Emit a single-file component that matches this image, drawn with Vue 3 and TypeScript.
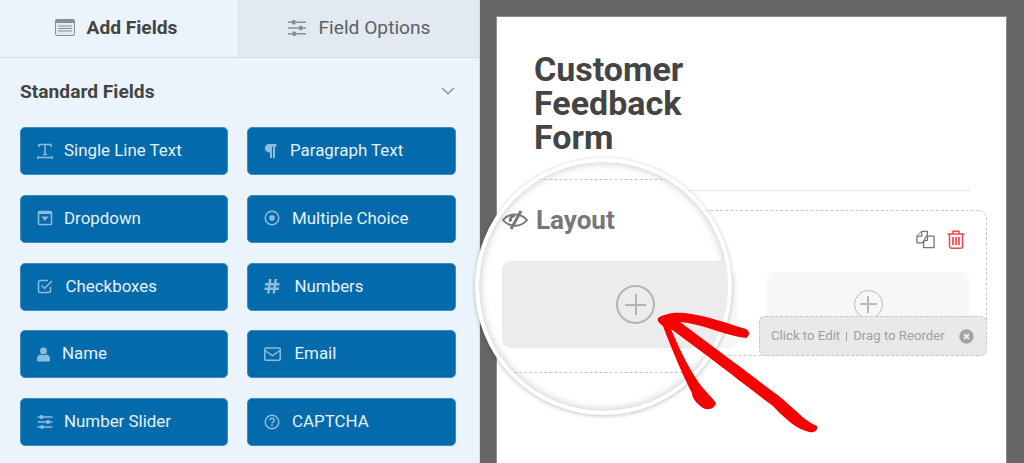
<script setup lang="ts">
interface Field {
  label: string;
  iconW: number; // width of the slot before the label, they differ per icon
  stroke?: string[];
  fill?: string[];
}

const fields: Field[] = [
  {
    label: "Single Line Text",
    iconW: 27.5,
    stroke: ["M2 4V1.5H14V4", "M8 1.5V11.5", "M6 11.5H10", "M1 14.5H15", "M1 13V16", "M15 13V16"],
  },
  { label: "Paragraph Text", iconW: 26.5, fill: ["M5 1H12.5V3.5H11V15H9V3.5H8V15H6V9.5C3 9.5 .8 8 .8 5.3S3 1 5 1Z"] },
  {
    label: "Dropdown",
    iconW: 27.5,
    stroke: ["M2.5 1.5H13.5A1 1 0 0 1 14.5 2.5V13.5A1 1 0 0 1 13.5 14.5H2.5A1 1 0 0 1 1.5 13.5V2.5A1 1 0 0 1 2.5 1.5Z"],
    fill: ["M1.5 2H14.5V4H1.5Z", "M4.5 6.5H11.5L8 11Z"],
  },
  {
    label: "Multiple Choice",
    iconW: 28.5,
    stroke: ["M8 1.2A6.8 6.8 0 1 1 8 14.8A6.8 6.8 0 1 1 8 1.2Z"],
    fill: ["M8 5.2A2.8 2.8 0 1 1 8 10.8A2.8 2.8 0 1 1 8 5.2Z"],
  },
  {
    label: "Checkboxes",
    iconW: 29,
    stroke: ["M13.5 9V13A1.5 1.5 0 0 1 12 14.5H3A1.5 1.5 0 0 1 1.5 13V4A1.5 1.5 0 0 1 3 2.5H11", "M4.5 7.5L7.5 10.5L15 3"],
  },
  {
    label: "Numbers",
    iconW: 31,
    fill: ["M5 1H7.5L7 5H10L10.5 1H13L12.5 5H15.5V7.5H12.2L11.9 9.5H15V12H11.5L11 15.5H8.5L9 12H6L5.5 15.5H3L3.5 12H.5V9.5H3.8L4.1 7.5H1V5H4.5ZM6.6 7.5L6.3 9.5H9.3L9.6 7.5Z"],
  },
  {
    label: "Name",
    iconW: 25.5,
    fill: ["M6.5 1.5A3.4 3.4 0 1 1 6.5 8.3A3.4 3.4 0 1 1 6.5 1.5Z", "M3 8.6C5 9.6 8 9.6 10 8.6C12 9.2 13 11 13 13V14A1.5 1.5 0 0 1 11.5 15.5H1.5A1.5 1.5 0 0 1 0 14V13C0 11 1 9.2 3 8.6Z"],
  },
  {
    label: "Email",
    iconW: 31,
    stroke: ["M2 2H15A1.2 1.2 0 0 1 16.2 3.2V13A1.2 1.2 0 0 1 15 14.2H2A1.2 1.2 0 0 1 .8 13V3.2A1.2 1.2 0 0 1 2 2Z", "M1 4.5L8.5 9.5L16 4.5"],
  },
  {
    label: "Number Slider",
    iconW: 27.5,
    stroke: ["M.5 3H15.5", "M.5 8H15.5", "M.5 13H15.5"],
    fill: ["M3 1.2H6V4.8H3Z", "M9.5 6.2H12.5V9.8H9.5Z", "M3.5 11.2H6.5V14.8H3.5Z"],
  },
  {
    label: "CAPTCHA",
    iconW: 28.5,
    stroke: ["M8 1.2A6.8 6.8 0 1 1 8 14.8A6.8 6.8 0 1 1 8 1.2Z", "M5.9 6.2C5.9 3.6 10.2 3.6 10.2 6.2C10.2 7.9 8 7.7 8 9.6"],
    fill: ["M7.1 10.6H8.9V12.2H7.1Z"],
  },
];
</script>

<template>
  <div class="page">
    <aside class="panel">
      <div class="tabs">
        <div class="tab active">
          <svg class="tab-icon" width="20" height="17" viewBox="0 0 20 17">
            <rect x="0.5" y="0.5" width="19" height="16" rx="1.5" fill="#e4e9ef" stroke="#8a8f94" />
            <rect x="0.5" y="0.5" width="19" height="3.5" fill="#8a8f94" />
            <path d="M3 7H17M3 9.5H17M3 12H17" stroke="#8a8f94" stroke-width="1.2" />
          </svg>
          <span>Add Fields</span>
        </div>
        <div class="tab">
          <svg class="tab-icon" width="18" height="18" viewBox="0 0 18 18" fill="#8a8f94">
            <path d="M0 2.5H18V4H0ZM0 8.2H18V9.7H0ZM0 14H18V15.5H0Z" />
            <rect x="4" y="1" width="3.5" height="4.5" rx="1" />
            <rect x="11" y="6.8" width="3.5" height="4.5" rx="1" />
            <rect x="4.5" y="12.5" width="3.5" height="4.5" rx="1" />
          </svg>
          <span>Field Options</span>
        </div>
      </div>

      <div class="section-head">
        <h2>Standard Fields</h2>
        <svg width="14" height="8" viewBox="0 0 14 8" fill="none" stroke="#8f959b" stroke-width="1.5">
          <path d="M.8 .8L7 6.8L13.2 .8" />
        </svg>
      </div>

      <div class="field-grid">
        <button v-for="f in fields" :key="f.label" class="field-btn">
          <span class="field-icon" :style="{ width: f.iconW + 'px' }">
            <svg width="17" height="17" viewBox="0 0 17 17">
              <path v-for="d in f.stroke" :key="d" :d="d" fill="none" stroke="#8dbcdc" stroke-width="1.5" />
              <path v-for="d in f.fill" :key="d" :d="d" fill="#8dbcdc" />
            </svg>
          </span>
          <span class="field-label">{{ f.label }}</span>
        </button>
      </div>
    </aside>

    <main class="stage">
      <div class="form">
        <h1>Customer<br />Feedback<br />Form</h1>
        <hr />
        <section class="layout-box">
          <div class="layout-actions">
            <svg width="19" height="19" viewBox="0 0 20 19" fill="#fff" stroke="#777" stroke-width="1.4" stroke-linejoin="round">
              <path d="M6 1H12V6H11L7 13H1V6Z" />
              <path d="M6 1V6H1" />
              <path d="M12 6H19V18H8V13L11 6Z" />
              <path d="M12 6V10.5H8.5" />
            </svg>
            <svg width="18" height="19" viewBox="0 0 18 19" fill="none" stroke="#f4444c" stroke-width="1.5">
              <path d="M.5 4H17.5M6 4V1.2H12V4" />
              <path d="M2.5 4V16.5A1.8 1.8 0 0 0 4.3 18.2H13.7A1.8 1.8 0 0 0 15.5 16.5V4" />
              <path d="M6 7V15M9 7V15M12 7V15" stroke-width="1.7" />
            </svg>
          </div>
          <div class="columns">
            <div class="col">
              <span class="plus"></span>
            </div>
            <div class="col">
              <span class="plus"></span>
            </div>
          </div>
          <div class="hover-tip">
            <span>Click to Edit</span>
            <i></i>
            <span>Drag to Reorder</span>
            <svg width="15" height="15" viewBox="0 0 15 15">
              <circle cx="7.5" cy="7.5" r="7.2" fill="#a3a3a3" />
              <path d="M5 5L10 10M10 5L5 10" stroke="#ececec" stroke-width="2" />
            </svg>
          </div>
        </section>
      </div>
    </main>

    <!-- magnifier over the form -->
    <div class="lens">
      <div class="lens-field">
        <div class="lens-title">
          <svg width="26" height="20" viewBox="0 0 26 20" fill="none" stroke="#777" stroke-width="2">
            <path d="M1 10C7 2.5 19 2.5 25 10C19 17.5 7 17.5 1 10Z" />
            <path d="M13 5.5A4.5 4.5 0 0 0 8.6 11.5" stroke-width="3" />
            <path d="M19 1L9 19" stroke-width="3" />
          </svg>
          <span>Layout</span>
        </div>
        <div class="lens-col">
          <span class="plus big"></span>
        </div>
      </div>
    </div>

    <svg class="arrow" width="1024" height="463" viewBox="0 0 1024 463" fill="#f60000">
      <path d="M658 318C664 314 674 312 684 313C704 315 726 323 746 329C750 331 750 336 746 338C728 336 706 326 688 323L680 322C704 340 738 365 772 391C780 396 788 404 796 411C804 419 812 424 817 426C818 430 815 433 809 432C797 429 786 420 773 406C762 398 720 365 671 329C678 346 687 365 697 380C701 387 711 396 716 403C715 408 709 411 703 408C696 403 692 398 692 393C684 378 672 350 663 326C659 323 657 321 658 318Z" />
    </svg>
  </div>
</template>

<style>
html,
body {
  margin: 0;
  background: #666;
}
</style>

<style scoped>
.page {
  position: relative;
  display: flex;
  width: 1024px;
  height: 463px;
  overflow: hidden;
  font-family: Roboto, "Liberation Sans", sans-serif;
}
.panel {
  width: 480px;
  flex: none;
  box-sizing: border-box;
  background: #ebf3fc;
  border-right: 1px solid #d6dde4;
}
.tabs {
  display: flex;
  height: 58px;
  box-sizing: border-box;
  border-bottom: 1px solid #d5dbe2;
}
.tab {
  flex: 1;
  display: flex;
  align-items: center;
  justify-content: center;
  gap: 12px;
  padding: 0 0 2px 1px;
  font-size: 19.2px;
  color: #5d6166;
  background: #e2e9f1;
  border-left: 1px solid #d5dbe2;
}
.tab.active {
  flex: none;
  width: 238px;
  box-sizing: border-box;
  padding: 0 6px 2px 0;
  font-weight: 700;
  color: #444;
  background: #ebf3fc;
  border-left: 0;
}
.section-head {
  display: flex;
  align-items: center;
  justify-content: space-between;
  padding: 22px 24px 0 20px;
  height: 22px;
}
.section-head h2 {
  margin: 0;
  font-size: 19.2px;
  font-weight: 700;
  color: #444;
}
.field-grid {
  display: grid;
  grid-template-columns: 208px 208.5px;
  column-gap: 19px;
  row-gap: 19.75px;
  padding: 25px 0 0 20px;
}
.field-btn {
  display: flex;
  align-items: center;
  height: 48px;
  padding: 0 0 2px 15.5px;
  border: 1px solid #3d8dc2;
  border-radius: 5px;
  background: #036aab;
  color: #e6f1f9;
  font: 400 16.9px Roboto, "Liberation Sans", sans-serif;
  box-sizing: border-box;
}
.field-icon {
  display: flex;
  flex: none;
  margin-top: 2px;
}
.stage {
  flex: 1;
  padding: 17px 18px 0 17px;
  background: #666;
  min-width: 0;
}
.form {
  height: 100%;
  box-sizing: border-box;
  padding: 35px 36px 0 37px;
  background: #fff;
  outline: 1px solid #8e8e8e;
}
h1 {
  margin: 0;
  font-size: 34px;
  line-height: 34px;
  font-weight: 700;
  color: #444;
}
hr {
  margin: 36px 0 18px;
  border: 0;
  border-top: 1px solid #e4e4e4;
}
.layout-box {
  position: relative;
  top: 1px;
  margin: 0 -17px;
  height: 146px;
  box-sizing: border-box;
  border: 1px dashed #c8c8c8;
  border-radius: 8px;
  padding: 19px 17px 0 19px;
}
.layout-actions {
  display: flex;
  justify-content: flex-end;
  gap: 12px;
  height: 42px;
  padding-right: 4px;
}
.columns {
  display: grid;
  grid-template-columns: 200px 202px;
  column-gap: 30px;
  justify-content: end;
}
.col {
  display: flex;
  align-items: center;
  justify-content: center;
  height: 76px;
  background: #f7f7f7;
  border-radius: 8px;
  padding-bottom: 12px;
  box-sizing: border-box;
}
.plus {
  position: relative;
  display: block;
  width: 29px;
  height: 29px;
  box-sizing: border-box;
  border: 1.5px solid #bbb;
  border-radius: 50%;
}
.plus::before,
.plus::after {
  content: "";
  position: absolute;
  background: #bbb;
}
.plus::before {
  left: 5px;
  right: 5px;
  top: calc(50% - 0.75px);
  height: 1.5px;
}
.plus::after {
  top: 5px;
  bottom: 5px;
  left: calc(50% - 0.75px);
  width: 1.5px;
}
.plus.big {
  width: 39px;
  height: 39px;
  border-width: 2px;
  border-color: #b4b4b4;
}
.plus.big::before {
  left: 7px;
  right: 7px;
  top: calc(50% - 1px);
  height: 2px;
  background: #b4b4b4;
}
.plus.big::after {
  top: 7px;
  bottom: 7px;
  left: calc(50% - 1px);
  width: 2px;
  background: #b4b4b4;
}
.hover-tip {
  position: absolute;
  right: -1px;
  bottom: -1px;
  display: flex;
  align-items: center;
  width: 228px;
  height: 40px;
  box-sizing: border-box;
  padding: 0 12px 2px 11px;
  background: #e9e9e9;
  border: 1px dashed #c8c8c8;
  border-radius: 6px;
  color: #a0a0a0;
  font-size: 13.2px;
}
.hover-tip i {
  width: 1px;
  height: 9px;
  margin: 2px 6px 0;
  background: #a0a0a0;
}
.hover-tip svg {
  margin-left: auto;
  margin-top: 2px;
}
.lens {
  position: absolute;
  left: 475px;
  top: 158px;
  width: 257px;
  height: 257px;
  box-sizing: border-box;
  border: 4px solid #fff;
  border-radius: 50%;
  background: #fff;
  overflow: hidden;
  box-shadow: 0 1px 4px rgba(0, 0, 0, 0.25), inset 0 0 8px rgba(0, 0, 0, 0.25);
}
.lens-field {
  margin-top: 17px;
  height: 194px;
  box-sizing: border-box;
  border-top: 1.5px dashed #c4c4c4;
  border-bottom: 1.5px dashed #c4c4c4;
  padding: 0 0 0 23px;
}
.lens-title {
  display: flex;
  align-items: center;
  gap: 8px;
  height: 28px;
  margin-top: 26px;
  font-size: 26px;
  font-weight: 700;
  color: #777;
}
.lens-col {
  display: flex;
  align-items: center;
  justify-content: center;
  width: 267px;
  height: 87px;
  margin-top: 27px;
  border-radius: 9px;
  background: #ececec;
}
.arrow {
  position: absolute;
  left: 0;
  top: 0;
  pointer-events: none;
}
</style>
